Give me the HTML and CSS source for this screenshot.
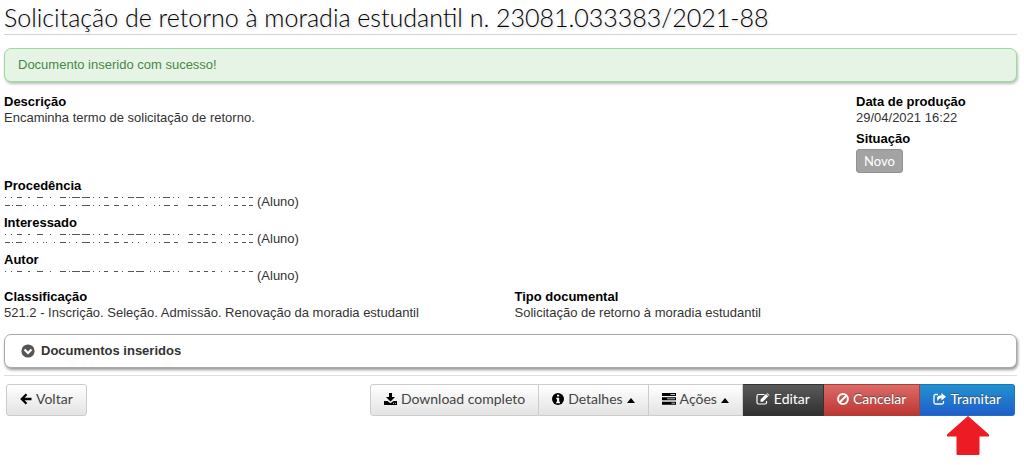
FILE: index.html
```html
<!DOCTYPE html>
<html lang="pt-BR">
<head>
<meta charset="utf-8">
<title>Solicitação de retorno à moradia estudantil</title>
<link rel="stylesheet" href="styles.css">
</head>
<body>
<svg class="defs" aria-hidden="true">
  <symbol id="covered" viewBox="0 0 250 12">
    <path fill="none" stroke="#555" stroke-width="1" d="M1 1.500h1M7 1.500h1M13 1.500h5M24 1.500h2M33 1.500h6M46 1.500h1M56 1.500h6M65 1.500h1M68 1.500h8M78 1.500h8M89 1.500h1M95 1.500h1M100 1.500h4M110 1.500h4M118 1.500h1M124 1.500h6M132 1.500h8M146 1.500h1M150 1.500h1M155 1.500h1M159 1.500h7M169 1.500h1M174 1.500h1M185 1.500h4M193 1.500h3M200 1.500h4M208 1.500h3M217 1.500h1M225 1.500h1M230 1.500h4M238 1.500h3M245 1.500h4"/>
  </symbol>
  <symbol id="covered-low" viewBox="0 0 250 12">
    <path fill="none" stroke="#555" stroke-width="1" d="M1 9.500h5M8 9.500h1M12 9.500h6M21 9.500h1M29 9.500h1M33 9.500h1M39 9.500h1M42 9.500h1M50 9.500h1M56 9.500h6M65 9.500h1M72 9.500h1M78 9.500h8M89 9.500h1M95 9.500h1M100 9.500h5M110 9.500h5M120 9.500h4M128 9.500h1M134 9.500h1M142 9.500h1M150 9.500h1M155 9.500h1M160 9.500h6M170 9.500h4M184 9.500h5M193 9.500h4M199 9.500h5M208 9.500h4M217 9.500h1M225 9.500h1M230 9.500h4M238 9.500h4M245 9.500h4"/>
  </symbol>
</svg>
<main class="page">
  <h1 class="title">Solicitação de retorno à moradia estudantil n. 23081.033383/2021-88</h1>
  <div class="alert" role="status">Documento inserido com sucesso!</div>

  <div class="details">
    <div class="row row-top">
      <dl class="item"><dt>Descrição</dt><dd>Encaminha termo de solicitação de retorno.</dd></dl>
      <div class="stack">
        <dl class="item"><dt>Data de produção</dt><dd>29/04/2021 16:22</dd></dl>
        <dl class="item"><dt>Situação</dt><dd class="status"><span class="badge">Novo</span></dd></dl>
      </div>
    </div>
    <dl class="item"><dt>Procedência</dt><dd class="person"><svg class="cover" viewBox="0 0 250 12" aria-hidden="true"><use href="#covered"/><use href="#covered-low"/></svg>(Aluno)</dd></dl>
    <dl class="item"><dt>Interessado</dt><dd class="person"><svg class="cover" viewBox="0 0 250 12" aria-hidden="true"><use href="#covered"/><use href="#covered-low"/></svg>(Aluno)</dd></dl>
    <dl class="item"><dt>Autor</dt><dd class="person"><svg class="cover" viewBox="0 0 250 12" aria-hidden="true"><use href="#covered"/></svg>(Aluno)</dd></dl>
    <div class="row row-half">
      <dl class="item"><dt>Classificação</dt><dd>521.2 - Inscrição. Seleção. Admissão. Renovação da moradia estudantil</dd></dl>
      <dl class="item"><dt>Tipo documental</dt><dd>Solicitação de retorno à moradia estudantil</dd></dl>
    </div>
  </div>

  <button type="button" class="panel" aria-expanded="false">
    <svg width="14" height="14" viewBox="0 0 14 14" aria-hidden="true"><circle cx="7" cy="7" r="6.600" fill="#555"/><path d="M3.500 5.500 7 9l3.500-3.500" fill="none" stroke="#fff" stroke-width="2.200"/></svg>
    Documentos inseridos
  </button>

  <div class="actions">
    <button type="button" class="btn back">
      <svg width="12" height="12" viewBox="0 0 12 12" aria-hidden="true"><path d="M6.500 1.200 1.800 6l4.700 4.800M2 6h9.500" fill="none" stroke="#000" stroke-width="2.300"/></svg>Voltar</button>
    <div class="group">
      <button type="button" class="btn"><svg width="13" height="12" viewBox="0 0 13 12" aria-hidden="true"><path d="M5 0h3v4h3L6.500 8.500 2 4h3zM0 8h3.500l3 2.300 3-2.300H13v4H0z"/><path d="M9 10.300h1M11 10.300h1" stroke="#fff" stroke-width=".8"/></svg>Download completo</button>
      <button type="button" class="btn"><svg width="12" height="12" viewBox="0 0 12 12" aria-hidden="true"><circle cx="6" cy="6" r="6"/><path d="M5 1.800h2.200v1.800H5zM4.200 4.700h3v4h.8v1.500H4.200V8.700H5V6.200h-.8z" fill="#f4f4f4"/></svg>Detalhes<svg class="caret" width="8" height="5" viewBox="0 0 8 5" aria-hidden="true"><path d="M4 0 8 5H0z"/></svg></button>
      <button type="button" class="btn"><svg width="14" height="12" viewBox="0 0 14 12" aria-hidden="true"><path d="M0 0h14v3H0zM0 4.300h14v3H0zM0 8.700h14v3H0z"/><path d="M8.500 1.500H13M5 5.800h8M9.500 10.200H13" stroke="#bbb"/></svg>Ações<svg class="caret" width="8" height="5" viewBox="0 0 8 5" aria-hidden="true"><path d="M4 0 8 5H0z"/></svg></button>
      <button type="button" class="btn dark"><svg width="14" height="12" viewBox="0 0 14 12" aria-hidden="true"><path d="M8.500 1.500h-6Q1 1.500 1 3v6.500Q1 11 2.500 11h6.500q1.500 0 1.500-1.500V8" fill="none" stroke="#fff" stroke-width="1.200"/><path d="m4.500 6.500 5.500-5.500 2.300 2.300L6.800 8.800H4.500zM10.600.5l.5-.5 2.500 2.300-.7.500z"/></svg>Editar</button>
      <button type="button" class="btn red"><svg width="12" height="12" viewBox="0 0 12 12" aria-hidden="true"><circle cx="6" cy="6" r="4.900" fill="none" stroke="#fff" stroke-width="2"/><path d="m2.800 9.200 6.400-6.400" stroke="#fff" stroke-width="2"/></svg>Cancelar</button>
      <button type="button" class="btn blue"><svg width="13" height="12" viewBox="0 0 13 12" aria-hidden="true"><path d="M5 1.500H2.500Q1 1.500 1 3v6.500Q1 11 2.500 11H9q1.500 0 1.500-1.500V8" fill="none" stroke="#fff" stroke-width="1.300"/><path d="M8.500 0 13 3.800 8.500 7.500V5.300Q5 5 5 8.800 1.800 2.300 8.500 2.200z"/></svg>Tramitar</button>
    </div>
  </div>
  <div class="pointer">
    <svg width="42" height="39" viewBox="0 0 42 39" aria-hidden="true"><path d="M21 0 L42 18.500 V20.500 H32.500 V38 Q32.500 39 31.500 39 H10.500 Q9.500 39 9.500 38 V20.500 H0 V18.500 Z" fill="#ed1c24"/></svg>
  </div>
</main>
</body>
</html>
```
FILE: styles.css
```css
* { box-sizing: border-box; }
body {
  margin: 0;
  background: #fff;
  color: #333;
  font: 13px/16px "Liberation Sans", Arial, sans-serif;
}
.defs { position: absolute; width: 0; height: 0; }
.page { padding: 0 7px 0 4px; }
.title {
  margin: 0 0 13px;
  height: 35px;
  border-bottom: 1px solid #d5d5d5;
  color: #000;
  font: 300 25px/34px Lato, sans-serif;
  text-shadow: 1px 2px 3px #ccc;
  white-space: nowrap;
}
.alert {
  padding: 7px 13px;
  border: 1px solid #9bdb9f;
  border-radius: 7px;
  background: #e6f4e6;
  color: #468847;
  line-height: 18px;
  box-shadow: 1px 2px 3px #bbb;
}
.details {
  display: flex;
  flex-direction: column;
  gap: 4px;
  margin: 11px 0 13px;
}
.row { display: grid; }
.row-top { grid-template-columns: 1fr 161px; }
.row-half { grid-template-columns: 1fr 1fr; column-gap: 8px; }
.stack { display: flex; flex-direction: column; gap: 4px; }
.item { margin: 0; }
.item dt { color: #000; font-weight: bold; line-height: 17px; }
.item dd { margin: 0; }
.status { padding-top: 2px; }
.badge {
  display: block;
  width: max-content;
  padding: 3px 7px;
  border: 1px solid #929292;
  border-radius: 3px;
  background: #a3a3a3;
  color: #fff;
  font: 13px/16px Lato, sans-serif;
}
.person { display: flex; align-items: center; gap: 3px; }
.cover { width: 250px; height: 12px; }
.panel {
  display: flex;
  align-items: center;
  gap: 6px;
  width: 100%;
  padding: 7px 16px;
  border: 1px solid #aaa;
  border-radius: 7px;
  background: #fff;
  color: #333;
  font: bold 13px/18px "Liberation Sans", Arial, sans-serif;
  box-shadow: 1px 2px 3px #999;
}
.actions {
  display: flex;
  justify-content: space-between;
  margin-top: 7px;
  padding: 8px 2px 0;
  border-top: 1px solid #ddd;
}
.group { display: flex; }
.btn {
  display: flex;
  align-items: center;
  gap: 4px;
  padding: 4px 13px 6px;
  border: 1px solid #ccc;
  background: linear-gradient(#fff, #e3e3e3);
  color: #444;
  font: 14px/20px Lato, sans-serif;
}
.group .btn + .btn { border-left-width: 0; }
.group .btn:first-child { border-radius: 3px 0 0 3px; }
.back { border-radius: 3px; }
.btn svg { fill: #000; }
.btn.dark, .btn.red, .btn.blue { color: #fff; text-shadow: 0 -1px 1px #555; }
.btn.dark svg, .btn.red svg, .btn.blue svg { fill: #fff; }
.btn.dark { border-color: #333; background: linear-gradient(#5a5a5a, #303030); }
.btn.red { border-color: #a8403c; background: linear-gradient(#dc6b67, #bd3732); }
.group .btn.blue { border-color: #1b74bd; border-radius: 0 3px 3px 0; background: linear-gradient(#2093cf, #205dcb); }
.btn .caret { align-self: flex-end; margin-bottom: 6px; }
.pointer { display: flex; justify-content: flex-end; padding-right: 28px; }
```
